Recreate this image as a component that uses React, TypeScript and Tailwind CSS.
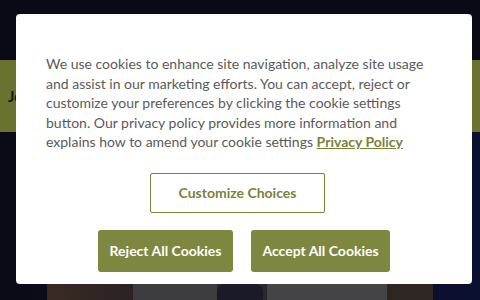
export default function App() {
  return (
    <div className="relative h-[300px] w-[480px] overflow-hidden bg-[#0b0b18] font-['Lato',sans-serif]">
      {/* page behind the dimmed overlay */}
      <div className="flex h-full flex-col">
        <div className="h-[60px] bg-[#0a0a17]" />
        <div className="flex h-[72px] items-center bg-[#6b7230] pl-[8px]">
          <span className="text-[15px] font-bold text-[#14160a]">Join</span>
        </div>
        <div className="flex flex-1 items-end justify-center bg-gradient-to-r from-[#0b0b18] via-[#0b0b1c] to-[#0c1030]">
          <div className="flex h-[20px] w-[386px] bg-[#2b2b2e]">
            <div className="w-[86px] bg-gradient-to-r from-[#3a2a22] to-[#2a2224]" />
            <div className="w-[84px] bg-[#3c3c3e]" />
            <div className="mt-[4px] h-[24px] w-[46px] rounded-[8px] bg-[#1a1a28]" />
            <div className="w-[4px] bg-[#2a2a2c]" />
            <div className="w-[120px] bg-[#444446]" />
            <div className="flex-1 bg-[#2e2622]" />
          </div>
        </div>
      </div>

      {/* cookie modal */}
      <div className="absolute left-[16px] top-[14px] flex h-[270px] w-[456px] flex-col rounded-[4px] bg-white px-[30px] pt-[40px]">
        <p className="text-[14px] leading-[19.5px] text-[#5a5a5a]">
          We use cookies to enhance site navigation, analyze site usage and assist in our marketing efforts. You can accept, reject or customize your preferences by clicking the cookie settings button. Our privacy policy provides more information and explains how to amend your cookie settings{' '}
          <a className="font-bold text-[#7a8238] underline">Privacy Policy</a>
        </p>
        <div className="mt-[21px] flex">
          <button className="ml-[104px] h-[40px] w-[175px] rounded-[2px] border border-[#7a8238] text-[14px] font-bold text-[#7a8238]">
            Customize Choices
          </button>
        </div>
        <div className="mt-[17px] flex gap-[18px] pl-[52px]">
          <button className="h-[42px] w-[135px] rounded-[3px] bg-[#7e8740] text-[14px] font-bold text-white">
            Reject All Cookies
          </button>
          <button className="h-[42px] w-[139px] rounded-[3px] bg-[#7e8740] text-[14px] font-bold text-white">
            Accept All Cookies
          </button>
        </div>
      </div>
    </div>
  );
}
